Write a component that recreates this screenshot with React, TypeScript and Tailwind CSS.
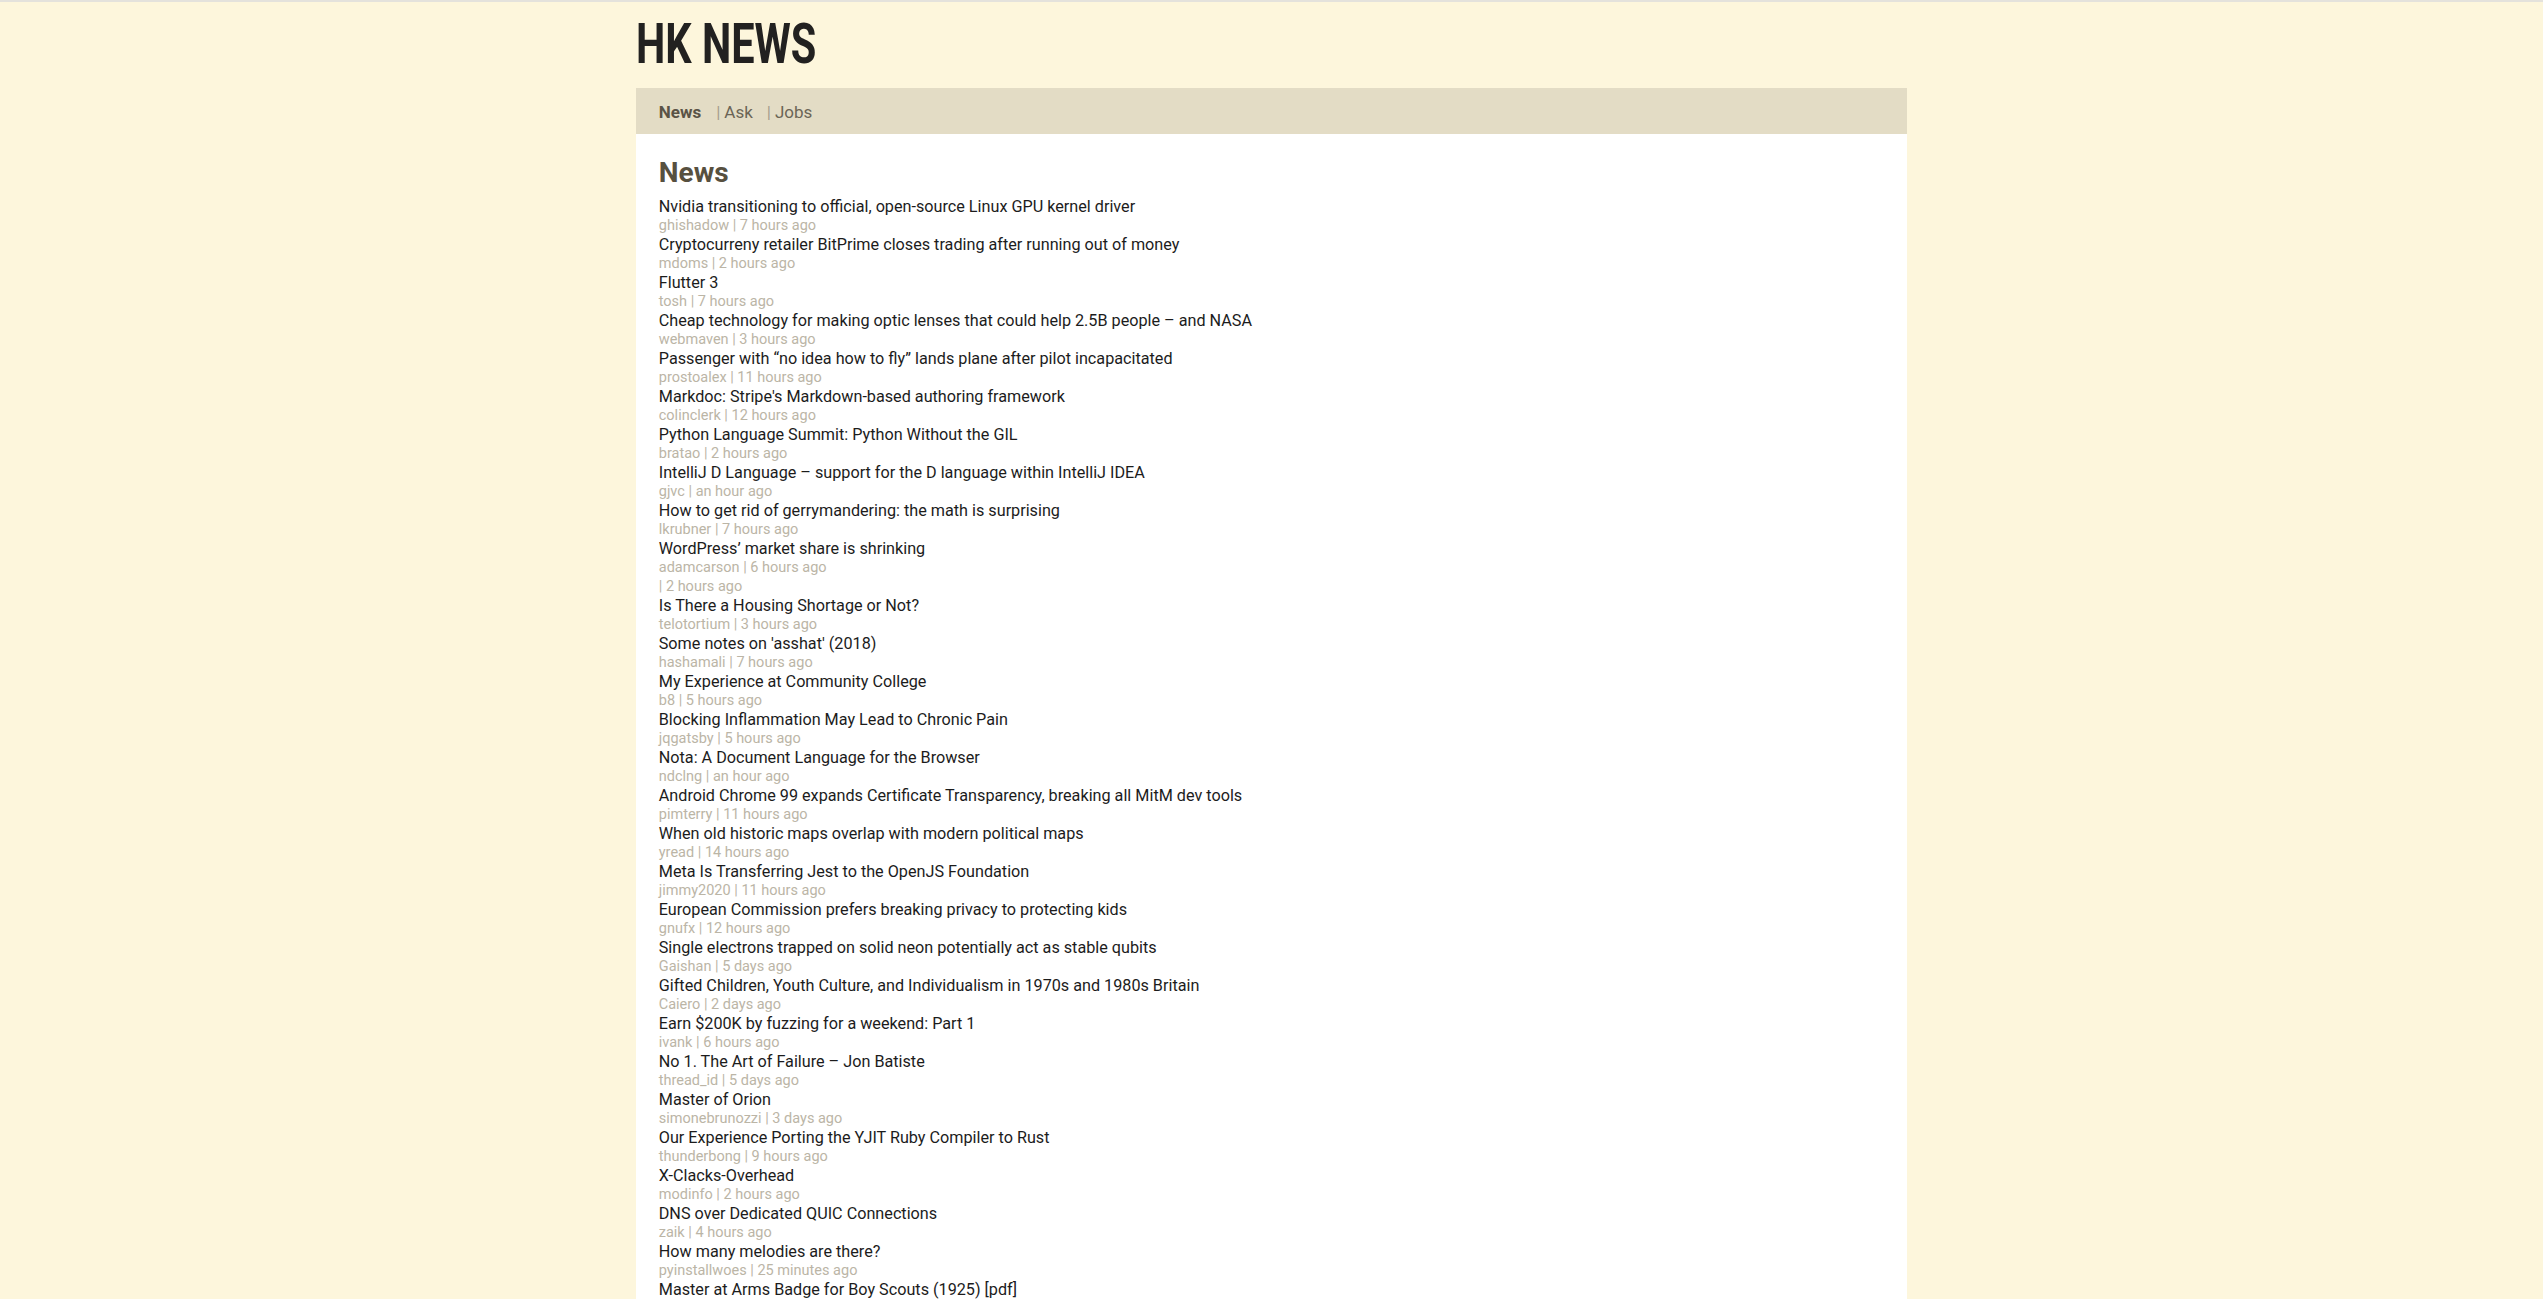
import React from "react";

type Item = { title: string; user: string; time: string };

const items: Item[] = [
  { title: "Nvidia transitioning to official, open-source Linux GPU kernel driver", user: "ghishadow", time: "7 hours ago" },
  { title: "Cryptocurreny retailer BitPrime closes trading after running out of money", user: "mdoms", time: "2 hours ago" },
  { title: "Flutter 3", user: "tosh", time: "7 hours ago" },
  { title: "Cheap technology for making optic lenses that could help 2.5B people – and NASA", user: "webmaven", time: "3 hours ago" },
  { title: "Passenger with “no idea how to fly” lands plane after pilot incapacitated", user: "prostoalex", time: "11 hours ago" },
  { title: "Markdoc: Stripe's Markdown-based authoring framework", user: "colinclerk", time: "12 hours ago" },
  { title: "Python Language Summit: Python Without the GIL", user: "bratao", time: "2 hours ago" },
  { title: "IntelliJ D Language – support for the D language within IntelliJ IDEA", user: "gjvc", time: "an hour ago" },
  { title: "How to get rid of gerrymandering: the math is surprising", user: "lkrubner", time: "7 hours ago" },
  { title: "WordPress’ market share is shrinking", user: "adamcarson", time: "6 hours ago" },
  { title: "", user: "", time: "2 hours ago" },
  { title: "Is There a Housing Shortage or Not?", user: "telotortium", time: "3 hours ago" },
  { title: "Some notes on 'asshat' (2018)", user: "hashamali", time: "7 hours ago" },
  { title: "My Experience at Community College", user: "b8", time: "5 hours ago" },
  { title: "Blocking Inflammation May Lead to Chronic Pain", user: "jqgatsby", time: "5 hours ago" },
  { title: "Nota: A Document Language for the Browser", user: "ndclng", time: "an hour ago" },
  { title: "Android Chrome 99 expands Certificate Transparency, breaking all MitM dev tools", user: "pimterry", time: "11 hours ago" },
  { title: "When old historic maps overlap with modern political maps", user: "yread", time: "14 hours ago" },
  { title: "Meta Is Transferring Jest to the OpenJS Foundation", user: "jimmy2020", time: "11 hours ago" },
  { title: "European Commission prefers breaking privacy to protecting kids", user: "gnufx", time: "12 hours ago" },
  { title: "Single electrons trapped on solid neon potentially act as stable qubits", user: "Gaishan", time: "5 days ago" },
  { title: "Gifted Children, Youth Culture, and Individualism in 1970s and 1980s Britain", user: "Caiero", time: "2 days ago" },
  { title: "Earn $200K by fuzzing for a weekend: Part 1", user: "ivank", time: "6 hours ago" },
  { title: "No 1. The Art of Failure – Jon Batiste", user: "thread_id", time: "5 days ago" },
  { title: "Master of Orion", user: "simonebrunozzi", time: "3 days ago" },
  { title: "Our Experience Porting the YJIT Ruby Compiler to Rust", user: "thunderbong", time: "9 hours ago" },
  { title: "X-Clacks-Overhead", user: "modinfo", time: "2 hours ago" },
  { title: "DNS over Dedicated QUIC Connections", user: "zaik", time: "4 hours ago" },
  { title: "How many melodies are there?", user: "pyinstallwoes", time: "25 minutes ago" },
  { title: "Master at Arms Badge for Boy Scouts (1925) [pdf]", user: "", time: "" },
];

export default function App() {
  return (
    <div className="min-h-screen bg-[#fdf6dc] border-t-2 border-[#e4e2dc] font-['Roboto',sans-serif] flex flex-col">
      <div className="w-1/2 mx-auto flex flex-col flex-1">
        <header className="pt-[14px] pb-[16px]">
          <h1 className="inline-block origin-left scale-x-[0.74] text-[56px] leading-[56px] font-bold text-[#222120]">
            HK NEWS
          </h1>
        </header>
        <nav className="h-[46px] bg-[#e3dcc5] flex items-center pl-[23px] pt-[2px] text-[17px] leading-[20px]">
          <span className="font-bold text-[#5a5346]">News</span>
          <span className="ml-[15px] text-[#a69f8e]">|</span>
          <span className="ml-[4px] text-[#6b6556]">Ask</span>
          <span className="ml-[14px] text-[#a69f8e]">|</span>
          <span className="ml-[4px] text-[#6b6556]">Jobs</span>
        </nav>
        <main className="bg-white flex-1 pl-[23px] pt-[22px]">
          <h2 className="text-[28px] leading-[34px] font-bold text-[#57503f] mb-[7px]">News</h2>
          <ul className="flex flex-col">
            {items.map((it, i) => (
              <li key={i} className="flex flex-col">
                {it.title && (
                  <span className="text-[16.2px] leading-[19px] text-[#1c1c1c]">{it.title}</span>
                )}
                {(it.user || it.time) && (
                  <span className="text-[14.5px] leading-[19px] text-[#bbb5a6]">
                    {it.user} | {it.time}
                  </span>
                )}
              </li>
            ))}
          </ul>
        </main>
      </div>
    </div>
  );
}
